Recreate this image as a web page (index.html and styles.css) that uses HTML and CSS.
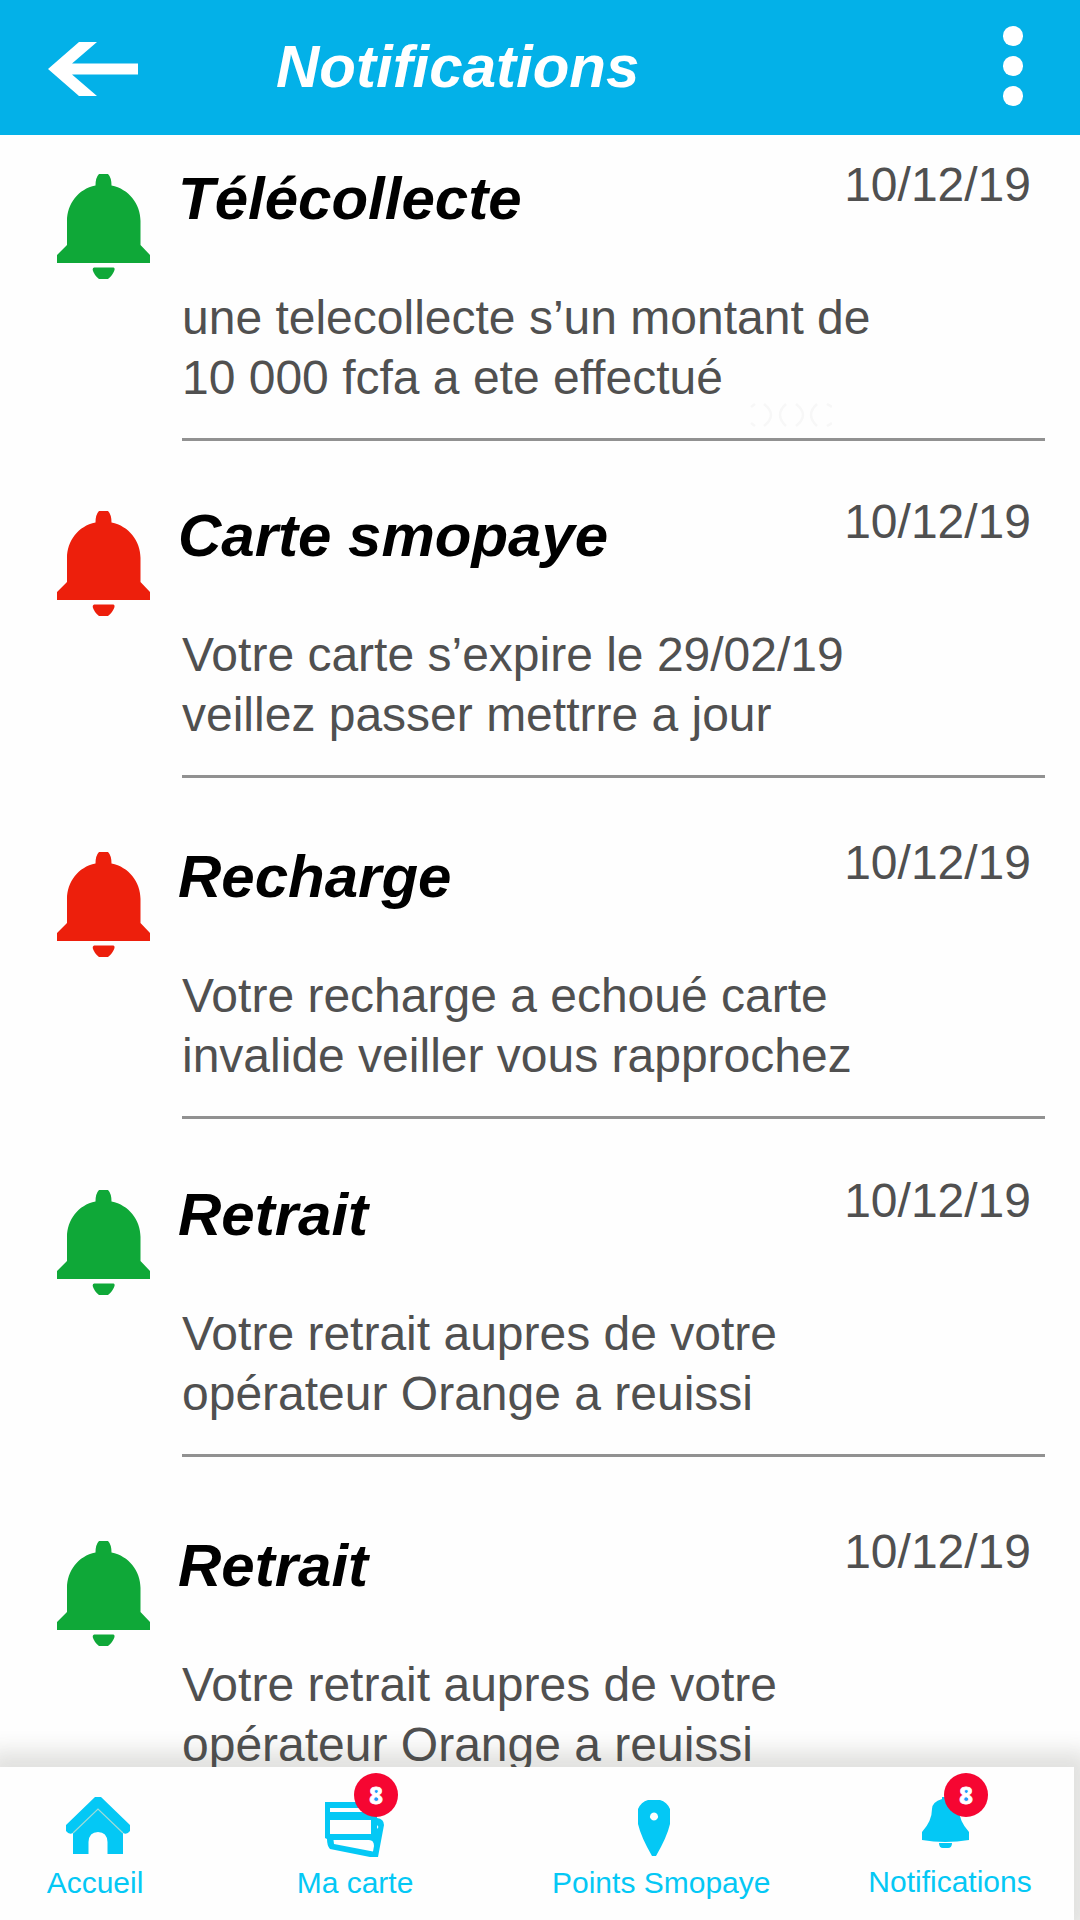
FILE: index.html
```html
<!DOCTYPE html>
<html lang="fr">
<head>
<meta charset="utf-8">
<title>Notifications</title>
<link rel="stylesheet" href="styles.css">
</head>
<body>
<svg class="defs" aria-hidden="true">
  <symbol id="bell" viewBox="0 0 93 105">
    <path d="M42 0H51Q54.500 3.500 54.500 11.500C72 15 83.500 30 83.500 47V71L93 81V89H0V81L10 71V47C10 30 21 15 38.500 11.500Q38.500 3.500 42 0ZM37 93.500H56.500Q58 94 57.500 96Q56 101 51 105H42Q37 101 35.700 96Q35.500 94 37 93.500Z"/>
  </symbol>
</svg>
<div class="screen">
  <header class="topbar">
    <svg class="back" viewBox="0 0 90 54"><path d="M0 27L31 0H49L24 21.500H90V32.500H24L49 54H31Z"/></svg>
    <h1 class="heading">Notifications</h1>
    <div class="more"><span></span><span></span><span></span></div>
  </header>
  <main class="list">
    <article class="item">
      <svg class="bell green"><use href="#bell"/></svg>
      <div class="content">
        <div class="line"><h2 class="title">Télécollecte</h2><time class="date">10/12/19</time></div>
        <p class="text">une telecollecte s’un montant de<br>10 000 fcfa a ete effectué</p>
        <svg class="ghost" viewBox="0 0 82 24"><path d="M1 4L5 1M1 20L5 23M14 1Q28 12 14 23M36 1Q24 12 36 23M46 1Q60 12 46 23M67 1Q55 12 67 23M77 1L82 4M77 23L82 20"/></svg>
      </div>
    </article>
    <article class="item">
      <svg class="bell red"><use href="#bell"/></svg>
      <div class="content">
        <div class="line"><h2 class="title">Carte smopaye</h2><time class="date">10/12/19</time></div>
        <p class="text">Votre carte s’expire le 29/02/19<br>veillez passer mettrre a jour</p>
      </div>
    </article>
    <article class="item">
      <svg class="bell red"><use href="#bell"/></svg>
      <div class="content">
        <div class="line"><h2 class="title">Recharge</h2><time class="date">10/12/19</time></div>
        <p class="text">Votre recharge a echoué carte<br>invalide veiller vous rapprochez</p>
      </div>
    </article>
    <article class="item">
      <svg class="bell green"><use href="#bell"/></svg>
      <div class="content">
        <div class="line"><h2 class="title">Retrait</h2><time class="date">10/12/19</time></div>
        <p class="text">Votre retrait aupres de votre<br>opérateur Orange a reuissi</p>
      </div>
    </article>
    <article class="item">
      <svg class="bell green"><use href="#bell"/></svg>
      <div class="content">
        <div class="line"><h2 class="title">Retrait</h2><time class="date">10/12/19</time></div>
        <p class="text">Votre retrait aupres de votre<br>opérateur Orange a reuissi</p>
      </div>
    </article>
  </main>
  <nav class="tabs">
    <a class="tab home">
      <svg class="icon" width="64" height="57" viewBox="0 0 64 57"><path fill-rule="evenodd" d="M29 0h6L64 28v6q-3 4-7 2V57H41.500V45Q41 35 32 35Q23 35 22.500 45V57H7V36q-4 2-7-2V28Z"/><path class="seam" d="M7 36L32 12L57 36"/></svg>
      <span class="label">Accueil</span>
    </a>
    <a class="tab card">
      <span class="badge">8</span>
      <svg class="icon" width="59" height="55" viewBox="0 0 59 55"><path fill-rule="evenodd" d="M0 0H52V16Q59 17 59 23L53 55H45L5 47Q2 44 2 37L0 36ZM5 6V10H46V6ZM5 18V32H46V18ZM8.500 38L9 42L48 49.500L49 44Q49 38 44 38ZM52 23V27L53.500 25Z"/></svg>
      <span class="label">Ma carte</span>
    </a>
    <a class="tab places">
      <svg class="icon" width="32" height="56" viewBox="0 0 32 56"><path fill-rule="evenodd" d="M10 0H22Q29 2 32 9V24Q29 37 18 56H14Q3 37 0 24V9Q3 2 10 0ZM16 12.500a4 4 0 1 0 .01 0Z"/></svg>
      <span class="label">Points Smopaye</span>
    </a>
    <a class="tab alerts">
      <span class="badge">8</span>
      <svg class="icon" width="47" height="51" viewBox="0 0 47 51"><path d="M20 0H27Q36 3 37 12Q37 24 47 35V43Q23 47 0 43V35Q10 24 10 12Q10 5 20 2ZM17 46H30Q30 51 26 51H21Q17 51 17 46Z"/></svg>
      <span class="label">Notifications</span>
    </a>
  </nav>
</div>
</body>
</html>
```
FILE: styles.css
```css
* { box-sizing: border-box; }
body { margin: 0; font-family: "Liberation Sans", Arial, sans-serif; }
.defs { display: none; }
.screen {
  width: 1080px;
  height: 1920px;
  display: flex;
  flex-direction: column;
  overflow: hidden;
  background: #fefefe;
}
.topbar {
  height: 135px;
  flex: none;
  display: flex;
  align-items: flex-start;
  padding: 26px 57px 0 48px;
  background: #03b1e8;
}
.back { width: 90px; height: 54px; margin-top: 16px; fill: #fff; }
.heading {
  flex: 1;
  margin: 7px 0 0 138px;
  color: #fff;
  font: italic bold 60px/68px "Liberation Sans", Arial, sans-serif;
}
.more { display: flex; flex-direction: column; gap: 10px; }
.more span { width: 20.500px; height: 20px; border-radius: 50%; background: #fff; }
.list { flex: 1; min-height: 0; overflow: hidden; }
.item { height: 337px; display: flex; padding: 39px 35px 0 57px; }
.item:nth-child(2) { height: 341px; }
.item:nth-child(3) { height: 338px; }
.item:nth-child(4) { height: 351px; }
.bell { width: 93px; height: 105px; flex: none; }
.green { fill: #0fa838; }
.red { fill: #ed1f0c; }
.content {
  height: 267px;
  margin-left: 32px;
  flex: 1;
  position: relative;
  border-bottom: 3px solid #919191;
}
.line { display: flex; justify-content: space-between; margin-left: -4px; }
.title { margin: -9px 0 0; font-size: 60px; line-height: 68px; font-style: italic; color: #000; }
.date { margin: -17px 14px 0 0; font-size: 48px; line-height: 56px; color: #505050; }
.text { margin: 55px 0 0; font-size: 48px; line-height: 60px; color: #505050; white-space: nowrap; }
.ghost {
  position: absolute;
  left: 568px;
  top: 229px;
  width: 82px;
  height: 24px;
  fill: none;
  stroke: #f7f7f7;
  stroke-width: 2.500;
}
.tabs {
  position: relative;
  width: 1074px;
  height: 153px;
  flex: none;
  display: grid;
  grid-template-columns: 190px 330px 268px 286px;
  background: #fefefe;
  box-shadow: 2px -2px 20px 14px rgba(60, 60, 50, .15);
}
.tab {
  position: relative;
  display: flex;
  flex-direction: column;
  align-items: center;
  color: #04c8f5;
}
.icon { fill: #04c8f5; }
.seam { fill: none; stroke: #9fdcd8; stroke-width: 1.200; }
.label { position: absolute; top: 98px; font-size: 30px; line-height: 36px; white-space: nowrap; }
.home .icon { margin: 30px 0 0 6px; }
.card .icon { margin: 35px 2px 0 0; }
.places .icon { margin-top: 33px; }
.places .label { left: 32px; }
.alerts { padding-left: 38px; }
.alerts .icon { margin: 30px 0 0 -10px; }
.alerts .label { top: 97px; }
.badge {
  position: absolute;
  top: 6px;
  left: 164px;
  width: 44px;
  height: 44px;
  border-radius: 50%;
  background:
    radial-gradient(circle at 21.500px 18px, #1e9bff 2.500px, transparent 3px),
    radial-gradient(circle at 21.500px 25.500px, #1e9bff 2.500px, transparent 3px),
    #f60632;
  color: #fff;
  text-align: center;
  font: bold 24px/43px "Open Sans", sans-serif;
  -webkit-text-stroke: .8px #fff;
}
.alerts .badge { left: 156px; }
```
